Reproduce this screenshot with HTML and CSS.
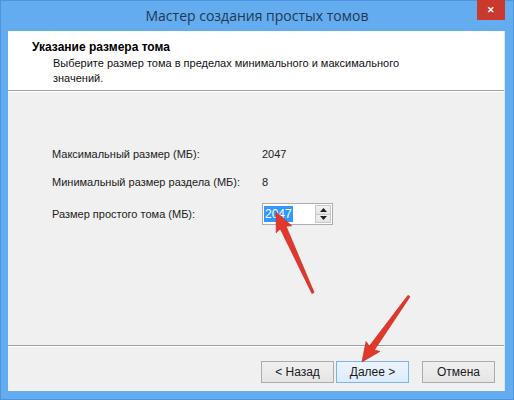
FILE: index.html
```html
<!DOCTYPE html>
<html lang="ru">
<head>
<meta charset="utf-8">
<title>Мастер создания простых томов</title>
<link rel="stylesheet" href="styles.css">
</head>
<body>
<div class="window">
  <div class="titlebar">
    <span class="title">Мастер создания простых томов</span>
    <div class="close">&#x2715;</div>
  </div>
  <div class="client">
    <div class="header">
      <div class="h-title">Указание размера тома</div>
      <div class="h-sub">Выберите размер тома в пределах минимального и максимального значений.</div>
    </div>
    <div class="body">
      <div class="grid">
        <div class="lbl r1">Максимальный размер (МБ):</div>
        <div class="val r1">2047</div>
        <div class="lbl r2">Минимальный размер раздела (МБ):</div>
        <div class="val r2">8</div>
        <div class="lbl r3">Размер простого тома (МБ):</div>
        <div class="spin r3">
          <div class="spin-text"><span class="sel">2047</span></div>
          <div class="spin-btns">
            <div class="sbtn"><svg width="7" height="4" viewBox="0 0 7 4"><path d="M0 4 L3.5 0 L7 4Z" fill="#222"/></svg></div>
            <div class="sbtn"><svg width="7" height="4" viewBox="0 0 7 4"><path d="M0 0 L3.5 4 L7 0Z" fill="#222"/></svg></div>
          </div>
        </div>
      </div>
    </div>
    <div class="footer">
      <div class="btn-group">
        <div class="btn">&lt; Назад</div>
        <div class="btn focus">Далее &gt;</div>
      </div>
      <div class="btn">Отмена</div>
    </div>
  </div>
  <svg class="arrows" width="514" height="400" viewBox="0 0 514 400">
    <g transform="translate(313,293) rotate(-114.5)">
      <polygon points="0,-1.2 72,-3.2 70,-8.5 89,0 70,8.5 72,3.2 0,1.2" fill="#e2372b" stroke="#c42a20" stroke-width="0.6"/>
    </g>
    <g transform="translate(409,296) rotate(125.5)">
      <polygon points="0,-1.2 64,-3.2 62,-8.5 81,0 62,8.5 64,3.2 0,1.2" fill="#e2372b" stroke="#c42a20" stroke-width="0.6"/>
    </g>
  </svg>
</div>
</body>
</html>
```

FILE: styles.css
```css
* { box-sizing: border-box; }
html, body { margin: 0; padding: 0; }
body {
  width: 514px;
  height: 400px;
  overflow: hidden;
  font-family: "Liberation Sans", Arial, sans-serif;
  font-size: 11px;
  color: #000;
}
.window {
  position: relative;
  width: 514px;
  height: 400px;
  background: #63acf0;
  border: 1px solid #4d94dc;
  display: flex;
  flex-direction: column;
}
.titlebar {
  position: relative;
  height: 30px;
  flex: none;
  display: flex;
  align-items: center;
  justify-content: center;
}
.title {
  font-family: "Open Sans", "Noto Sans", sans-serif;
  font-size: 14px;
  color: #23384f;
  margin-top: -1px;
}
.close {
  position: absolute;
  top: -1px;
  right: 8px;
  width: 28px;
  height: 20px;
  background: #c9392e;
  color: #fff;
  font-size: 9px;
  font-weight: bold;
  display: flex;
  align-items: center;
  justify-content: center;
}
.client {
  flex: 1;
  margin: 0 8px 8px 7px;
  background: #f0f0f0;
  display: flex;
  flex-direction: column;
  border-right: 1px solid #d8e6f3;
}
.header {
  height: 60px;
  flex: none;
  background: #fff;
  border-bottom: 1px solid #a0a0a0;
  padding: 9px 0 0 24px;
}
.h-title {
  font-weight: bold;
  font-size: 12px;
  line-height: 14px;
}
.h-sub {
  margin: 2px 0 0 21px;
  width: 370px;
  line-height: 15px;
  color: #111;
}
.body {
  flex: 1;
  border-top: 1px solid #fff;
  border-bottom: 1px solid #a0a0a0;
  padding: 52px 0 0 44px;
}
.grid {
  display: grid;
  grid-template-columns: 210px auto;
  grid-template-rows: 20px 28px 36px;
  align-items: center;
}
.lbl, .val { color: #222; }
.r2 { margin-top: 8px; }
.r3 { margin-top: 8px; }
.spin {
  width: 71px;
  height: 22px;
  background: #fff;
  border: 1px solid #abadb3;
  display: flex;
  justify-self: start;
}
.spin-text {
  flex: 1;
  padding: 2px 0 0 1px;
}
.sel {
  background: #3399ff;
  color: #fff;
  display: inline-block;
  font-size: 12px;
  line-height: 16px;
  padding: 0 1px;
}
.spin-btns {
  width: 17px;
  display: flex;
  flex-direction: column;
  gap: 0;
  padding: 1px 1px 1px 0;
}
.sbtn {
  flex: 1;
  background: linear-gradient(#f2f2f2, #e4e4e4);
  border: 1px solid #c8c8c8;
  display: flex;
  align-items: center;
  justify-content: center;
}
.sbtn + .sbtn { border-top: none; }
.footer {
  height: 45px;
  flex: none;
  border-top: 1px solid #fff;
  display: flex;
  align-items: flex-start;
  justify-content: flex-end;
  padding: 14px 9px 0 0;
  gap: 13px;
}
.btn-group { display: flex; gap: 2px; }
.btn {
  width: 73px;
  height: 22px;
  border: 1px solid #acacac;
  background: linear-gradient(#f0f0f0, #e5e5e5);
  display: flex;
  align-items: center;
  justify-content: center;
  color: #1a1a1a;
  font-size: 12px;
}
.btn.focus {
  border-color: #7eb4ea;
  background: linear-gradient(#ecf4fc, #dcecfc);
}
.arrows {
  position: absolute;
  left: -1px;
  top: -1px;
  pointer-events: none;
}
```
